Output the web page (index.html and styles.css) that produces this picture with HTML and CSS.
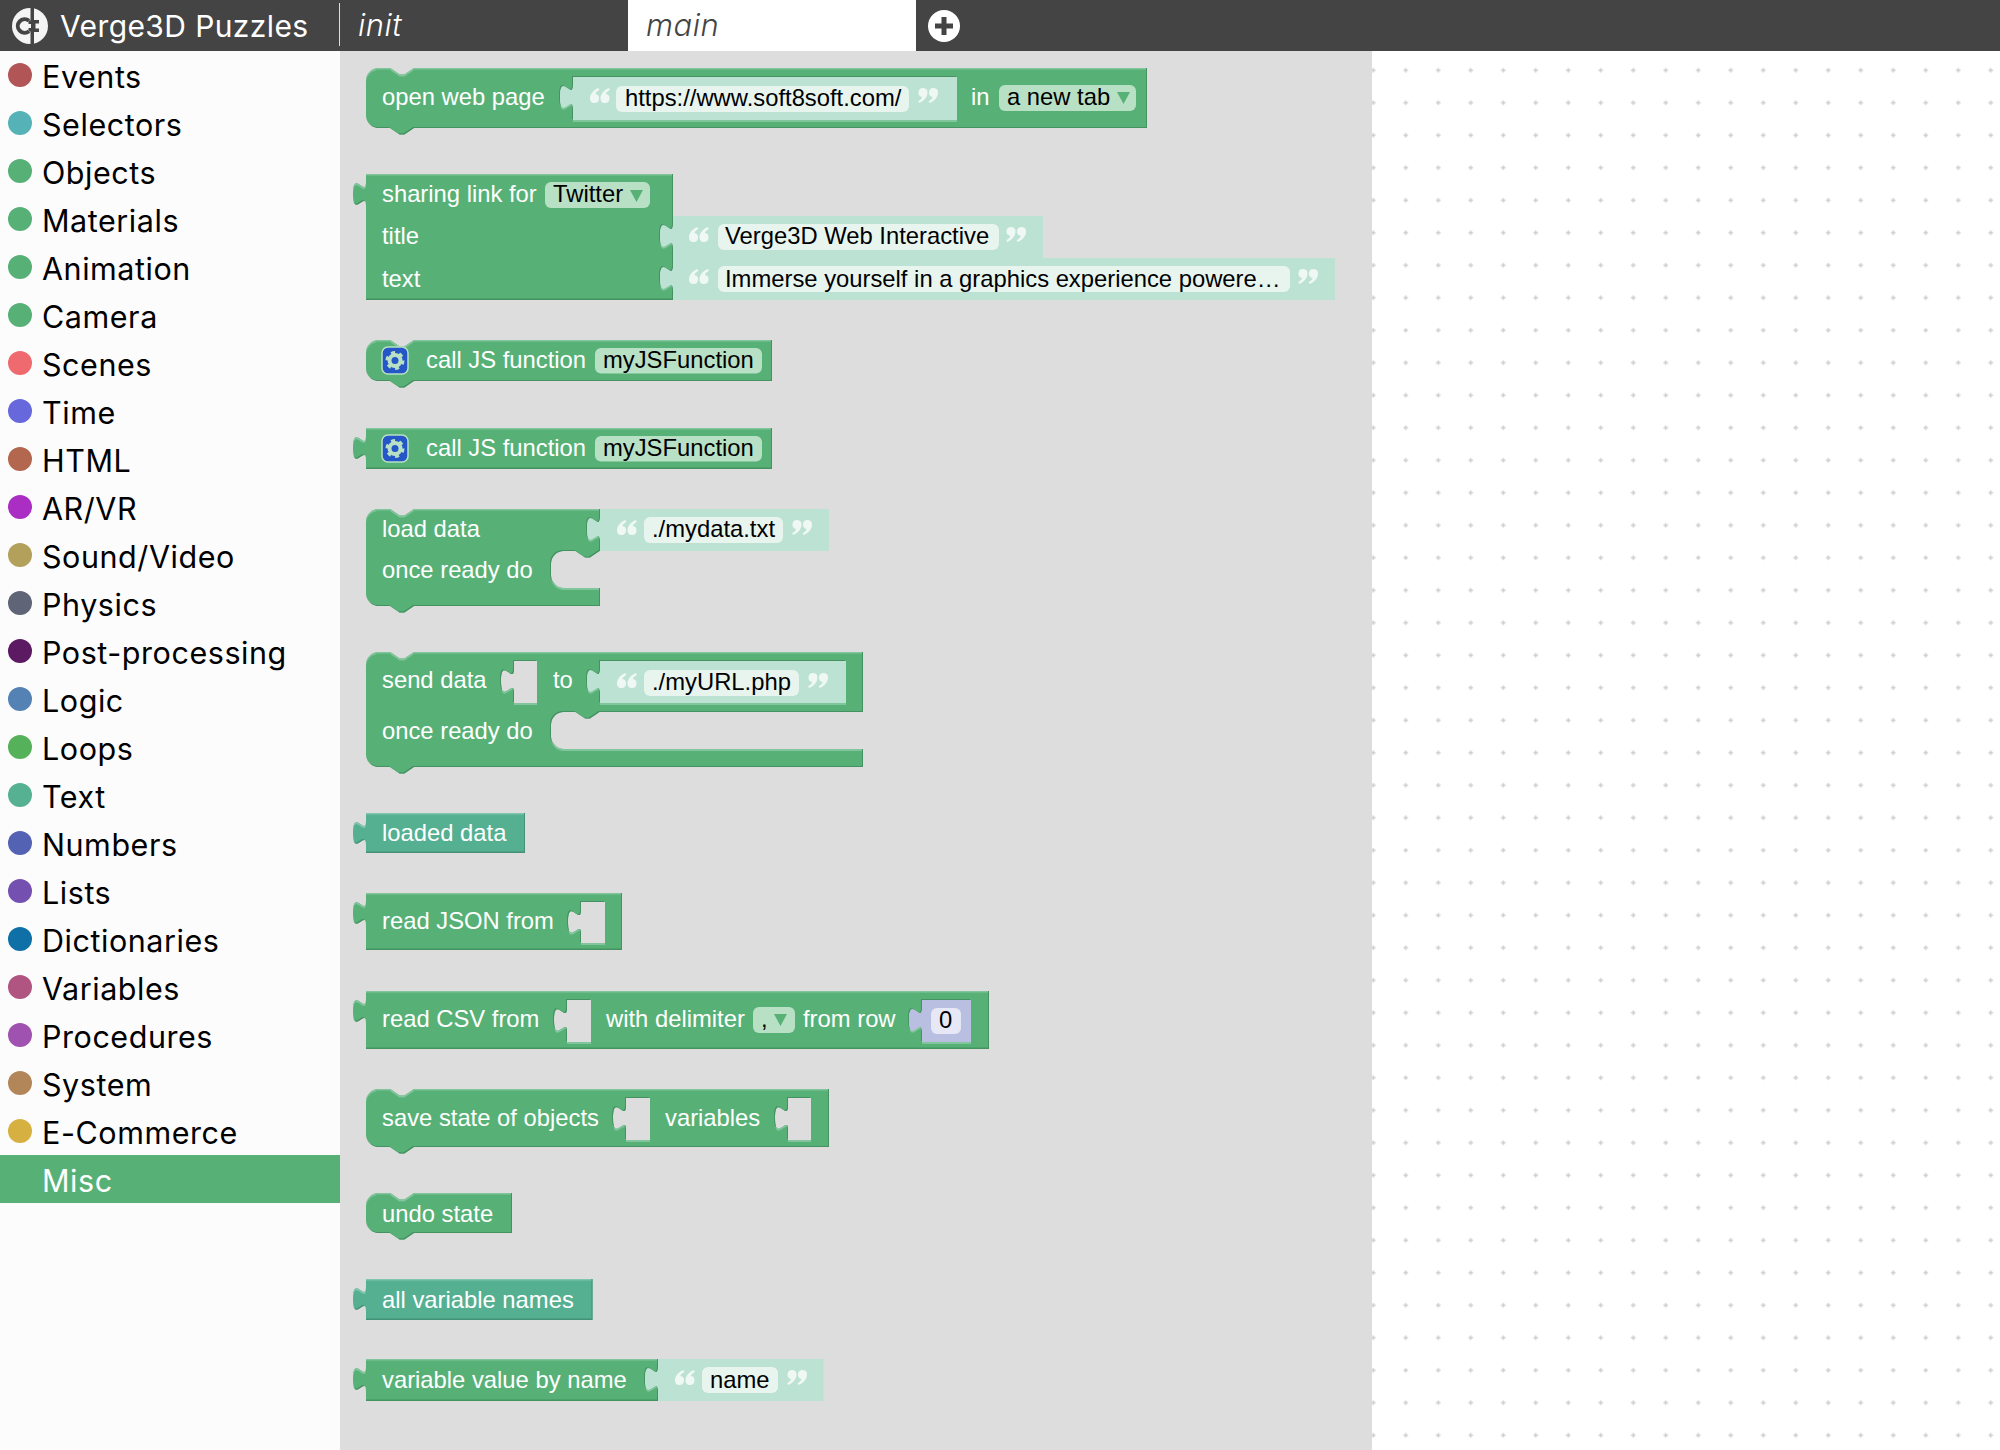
FILE: index.html
```html
<!DOCTYPE html>
<html lang="en">
<head>
<meta charset="utf-8">
<title>Verge3D Puzzles</title>
<link rel="stylesheet" href="styles.css">
</head>
<body>
<header class="topbar">
  <div class="brand">
    <svg class="logo" viewBox="0 0 36 36" width="36" height="36">
      <circle cx="18" cy="18" r="18" fill="#f4f4f4"/>
      <path d="M17 12.800a6.800 6.800 0 1 0 0 10.400" fill="none" stroke="#444" stroke-width="4"/>
      <path d="M18.500 0h3.500v12h5v3.500h-3.500v5H27v3.500h-5v12h-3.500V23.500h-2v-3.500h2.500v-4h-2.500v-3.500h2z" fill="#444"/>
    </svg>
    <span class="brand-name">Verge3D Puzzles</span>
    <span class="brand-sep"></span>
  </div>
  <div class="tab">init</div>
  <div class="tab tab-active">main</div>
  <svg class="add" viewBox="0 0 32 32" width="32" height="32">
    <circle cx="16" cy="16" r="16" fill="#fff"/>
    <path d="M13.500 7h5v6.500H25v5h-6.500V25h-5v-6.500H7v-5h6.500z" fill="#444"/>
  </svg>
</header>
<main class="main">
  <nav class="toolbox">
    <div class="cat"><i class="dot c-events"></i>Events</div>
    <div class="cat"><i class="dot c-selectors"></i>Selectors</div>
    <div class="cat"><i class="dot c-green"></i>Objects</div>
    <div class="cat"><i class="dot c-green"></i>Materials</div>
    <div class="cat"><i class="dot c-green"></i>Animation</div>
    <div class="cat"><i class="dot c-green"></i>Camera</div>
    <div class="cat"><i class="dot c-scenes"></i>Scenes</div>
    <div class="cat"><i class="dot c-time"></i>Time</div>
    <div class="cat"><i class="dot c-html"></i>HTML</div>
    <div class="cat"><i class="dot c-arvr"></i>AR/VR</div>
    <div class="cat"><i class="dot c-sound"></i>Sound/Video</div>
    <div class="cat"><i class="dot c-physics"></i>Physics</div>
    <div class="cat"><i class="dot c-post"></i>Post-processing</div>
    <div class="cat"><i class="dot c-logic"></i>Logic</div>
    <div class="cat"><i class="dot c-loops"></i>Loops</div>
    <div class="cat"><i class="dot c-text"></i>Text</div>
    <div class="cat"><i class="dot c-numbers"></i>Numbers</div>
    <div class="cat"><i class="dot c-lists"></i>Lists</div>
    <div class="cat"><i class="dot c-dicts"></i>Dictionaries</div>
    <div class="cat"><i class="dot c-vars"></i>Variables</div>
    <div class="cat"><i class="dot c-procs"></i>Procedures</div>
    <div class="cat"><i class="dot c-system"></i>System</div>
    <div class="cat"><i class="dot c-ecom"></i>E-Commerce</div>
    <div class="cat cat-active"><i class="dot c-green"></i>Misc</div>
  </nav>
  <svg class="flyout" viewBox="340 51 1032 1399" width="1032" height="1399">
    <defs>
      <filter id="bevel" x="-3%" y="-10%" width="106%" height="120%" color-interpolation-filters="sRGB">
        <feOffset in="SourceAlpha" dy="1.500" result="down"/>
        <feComposite in="SourceAlpha" in2="down" operator="out" result="topEdge"/>
        <feFlood flood-color="#80c59b"/>
        <feComposite in2="topEdge" operator="in" result="light"/>
        <feOffset in="SourceAlpha" dx="-1" dy="-1.500" result="up"/>
        <feComposite in="SourceAlpha" in2="up" operator="out" result="botEdge"/>
        <feFlood flood-color="#459161"/>
        <feComposite in2="botEdge" operator="in" result="dark"/>
        <feMerge>
          <feMergeNode in="SourceGraphic"/>
          <feMergeNode in="light"/>
          <feMergeNode in="dark"/>
        </feMerge>
      </filter>
      <filter id="bevel-teal" x="-3%" y="-10%" width="106%" height="120%" color-interpolation-filters="sRGB">
        <feOffset in="SourceAlpha" dy="1.500" result="down"/>
        <feComposite in="SourceAlpha" in2="down" operator="out" result="topEdge"/>
        <feFlood flood-color="#80c5ae"/>
        <feComposite in2="topEdge" operator="in" result="light"/>
        <feOffset in="SourceAlpha" dx="-1" dy="-1.500" result="up"/>
        <feComposite in="SourceAlpha" in2="up" operator="out" result="botEdge"/>
        <feFlood flood-color="#449177"/>
        <feComposite in2="botEdge" operator="in" result="dark"/>
        <feMerge>
          <feMergeNode in="SourceGraphic"/>
          <feMergeNode in="light"/>
          <feMergeNode in="dark"/>
        </feMerge>
      </filter>
      <g id="gear">
        <rect x="-13" y="-13.500" width="26" height="27" rx="6" class="ic-bg"/>
        <circle r="5.500" class="ic-ring"/>
        <circle r="8" class="ic-teeth"/>
      </g>
      <path id="qo" class="qm" d="M8.500 0C3.500 2 0 6 0 10.500a4.500 4.500 0 1 0 5.300-4.400C5.500 4.700 7 3.200 9.300 2zM19 0c-5 2-8.500 6-8.500 10.500a4.500 4.500 0 1 0 5.300-4.400c.2-1.400 1.700-2.900 4-4.100z"/>
      <use id="qc" href="#qo" transform="rotate(180 10 7.500)"/>
    </defs>

    <!-- open web page -->
    <path class="blk" fill-rule="evenodd" d="M366 80.800a12.800 12.800 0 0 1 12.800-12.800H390l9.600 6.400h4.800l9.600-6.400H1147V128H414l-9.600 6.400h-4.800L390 128H378.800a12.800 12.800 0 0 1-12.800-12.800zM573 77H957V120H573V109c0-16-13 13-13-12s13 4 13-12z"/>
    <path class="shd" d="M573 77H957V120H573V109c0-16-13 13-13-12s13 4 13-12z"/>
    <text class="t" x="382" y="105">open web page</text>
    <use href="#qo" x="590" y="88"/>
    <rect class="fld" x="616" y="86" width="293" height="26" rx="6"/>
    <text class="f" x="625" y="106">https://www.soft8soft.com/</text>
    <use href="#qc" x="918" y="88"/>
    <text class="t" x="971" y="105">in</text>
    <rect class="dd" x="999" y="85" width="137" height="26" rx="6"/>
    <text class="f" x="1007" y="105">a new tab</text>
    <path class="arr" d="M1117 92h13l-6.500 12z"/>

    <!-- sharing link -->
    <path class="blk" d="M366 174H673V224c0 16-13-13-13 12s13-4 13 12V266c0 16-13-13-13 12s13-4 13 12V300H366V206c0-16-13 13-13-12s13 4 13-12z"/>
    <path class="shd" d="M673 216H1043V258H673V248c0-16-13 13-13-12s13 4 13-12z"/>
    <path class="shd" d="M673 258H1335V300H673V290c0-16-13 13-13-12s13 4 13-12z"/>
    <text class="t" x="382" y="202">sharing link for</text>
    <rect class="dd" x="545" y="182" width="105" height="26" rx="6"/>
    <text class="f" x="553" y="202">Twitter</text>
    <path class="arr" d="M630 190h13l-6.500 12z"/>
    <text class="t" x="382" y="244">title</text>
    <use href="#qo" x="689" y="227"/>
    <rect class="fld" x="718" y="224" width="281" height="26" rx="6"/>
    <text class="f" x="725" y="244">Verge3D Web Interactive</text>
    <use href="#qc" x="1006" y="227"/>
    <text class="t" x="382" y="287">text</text>
    <use href="#qo" x="689" y="269"/>
    <rect class="fld" x="718" y="266" width="572" height="26" rx="6"/>
    <text class="f" x="725" y="287">Immerse yourself in a graphics experience powere…</text>
    <use href="#qc" x="1298" y="269"/>

    <!-- call JS hat -->
    <path class="blk" d="M366 352.800a12.800 12.800 0 0 1 12.800-12.800H390l9.600 6.400h4.800l9.600-6.400H772V381H414l-9.600 6.400h-4.800L390 381H378.800a12.800 12.800 0 0 1-12.800-12.800z"/>
    <use href="#gear" x="395" y="360.500"/>
    <text class="t" x="426" y="368">call JS function</text>
    <rect class="dd" x="595" y="348" width="167" height="25.500" rx="6"/>
    <text class="f" x="603" y="368">myJSFunction</text>

    <!-- call JS value -->
    <path class="blk" d="M366 428H772V469H366V460c0-16-13 13-13-12s13 4 13-12z"/>
    <use href="#gear" x="395" y="448.500"/>
    <text class="t" x="426" y="456">call JS function</text>
    <rect class="dd" x="595" y="436" width="167" height="25.500" rx="6"/>
    <text class="f" x="603" y="456">myJSFunction</text>

    <!-- load data -->
    <path class="blk" d="M366 521.800a12.800 12.800 0 0 1 12.800-12.800H390l9.600 6.400h4.800l9.600-6.400H600V517c0 16-13-13-13 12s13-4 13 12V551H599.500l-9.600 6.400h-4.800l-9.600-6.400H563.800a12.800 12.800 0 0 0-12.800 12.800v11.400a12.800 12.800 0 0 0 12.800 12.800H600V606H414l-9.600 6.400h-4.800L390 606H378.800a12.800 12.800 0 0 1-12.800-12.800z"/>
    <path class="shd" d="M600 509H829V551H600V541c0-16-13 13-13-12s13 4 13-12z"/>
    <text class="t" x="382" y="537">load data</text>
    <text class="t" x="382" y="578">once ready do</text>
    <use href="#qo" x="617" y="520"/>
    <rect class="fld" x="644" y="517" width="139" height="26" rx="6"/>
    <text class="f" x="652" y="537">./mydata.txt</text>
    <use href="#qc" x="792" y="520"/>

    <!-- send data -->
    <path class="blk" fill-rule="evenodd" d="M366 664.800a12.800 12.800 0 0 1 12.800-12.800H390l9.600 6.400h4.800l9.600-6.400H863V712H599.500l-9.600 6.400h-4.800l-9.600-6.400H563.800a12.800 12.800 0 0 0-12.800 12.800v11.400a12.800 12.800 0 0 0 12.800 12.800H863V767H414l-9.600 6.400h-4.800L390 767H378.800a12.800 12.800 0 0 1-12.800-12.800zM514 661H537V703H514V693c0-16-13 13-13-12s13 4 13-12zM600 661H846V703H600V693c0-16-13 13-13-12s13 4 13-12z"/>
    <path class="shd" d="M600 661H846V703H600V693c0-16-13 13-13-12s13 4 13-12z"/>
    <text class="t" x="382" y="688">send data</text>
    <text class="t" x="553" y="688">to</text>
    <text class="t" x="382" y="739">once ready do</text>
    <use href="#qo" x="617" y="673"/>
    <rect class="fld" x="644" y="670" width="155" height="26" rx="6"/>
    <text class="f" x="652" y="690">./myURL.php</text>
    <use href="#qc" x="808" y="673"/>

    <!-- loaded data -->
    <path class="blk teal" d="M366 813H525V853H366V845c0-16-13 13-13-12s13 4 13-12z"/>
    <text class="t" x="382" y="841">loaded data</text>

    <!-- read JSON -->
    <path class="blk" fill-rule="evenodd" d="M366 893H622V950H366V925c0-16-13 13-13-12s13 4 13-12zM581 902H605V943H581V934c0-16-13 13-13-12s13 4 13-12z"/>
    <text class="t" x="382" y="929">read JSON from</text>

    <!-- read CSV -->
    <path class="blk" fill-rule="evenodd" d="M366 991H989V1049H366V1023c0-16-13 13-13-12s13 4 13-12zM567 1000H591V1042H567V1032c0-16-13 13-13-12s13 4 13-12zM922 1000H971V1042H922V1032c0-16-13 13-13-12s13 4 13-12z"/>
    <path class="shd num" d="M922 1000H971V1042H922V1032c0-16-13 13-13-12s13 4 13-12z"/>
    <text class="t" x="382" y="1027">read CSV from</text>
    <text class="t" x="606" y="1027">with delimiter</text>
    <rect class="dd" x="753" y="1007" width="42" height="26" rx="6"/>
    <text class="f" x="761" y="1027">,</text>
    <path class="arr" d="M774 1014h13l-6.500 12z"/>
    <text class="t" x="803" y="1027">from row</text>
    <rect class="fld numf" x="931" y="1008" width="30" height="26" rx="6"/>
    <text class="f" x="939" y="1028">0</text>

    <!-- save state -->
    <path class="blk" fill-rule="evenodd" d="M366 1101.800a12.800 12.800 0 0 1 12.800-12.800H390l9.600 6.400h4.800l9.600-6.400H829V1147H414l-9.600 6.400h-4.800L390 1147H378.800a12.800 12.800 0 0 1-12.800-12.800zM626 1098H650V1140H626V1130c0-16-13 13-13-12s13 4 13-12zM788 1098H811V1140H788V1130c0-16-13 13-13-12s13 4 13-12z"/>
    <text class="t" x="382" y="1126">save state of objects</text>
    <text class="t" x="665" y="1126">variables</text>

    <!-- undo state -->
    <path class="blk" d="M366 1205.800a12.800 12.800 0 0 1 12.800-12.800H390l9.600 6.400h4.800l9.600-6.400H512V1233H414l-9.600 6.400h-4.800L390 1233H378.800a12.800 12.800 0 0 1-12.800-12.800z"/>
    <text class="t" x="382" y="1222">undo state</text>

    <!-- all variable names -->
    <path class="blk teal" d="M366 1279H592.500V1320H366V1311c0-16-13 13-13-12s13 4 13-12z"/>
    <text class="t" x="382" y="1308">all variable names</text>

    <!-- variable value by name -->
    <path class="blk" d="M366 1359H658V1367c0 16-13-13-13 12s13-4 13 12V1401H366V1391c0-16-13 13-13-12s13 4 13-12z"/>
    <path class="shd" d="M658 1359H823.500V1401H658V1391c0-16-13 13-13-12s13 4 13-12z"/>
    <text class="t" x="382" y="1388">variable value by name</text>
    <use href="#qo" x="675" y="1370"/>
    <rect class="fld" x="702" y="1367" width="76" height="26" rx="6"/>
    <text class="f" x="710" y="1388">name</text>
    <use href="#qc" x="787" y="1370"/>
  </svg>
  <svg class="workspace" width="628" height="1399">
    <defs>
      <pattern id="grid" width="32.500" height="32.500" patternUnits="userSpaceOnUse" patternTransform="translate(-15 3)">
        <path class="cross" d="M14 16.250h4.500M16.250 14v4.500"/>
      </pattern>
    </defs>
    <rect width="628" height="1399" fill="url(#grid)"/>
  </svg>
</main>
</body>
</html>
```
FILE: styles.css
```css
html, body {
  margin: 0;
  height: 100%;
  overflow: hidden;
  background: #fff;
}
body {
  display: flex;
  flex-direction: column;
  width: 2000px;
  height: 1450px;
  font-family: "Inter", "Roboto", "Liberation Sans", sans-serif;
}
.topbar {
  display: flex;
  align-items: center;
  height: 51px;
  background: #444;
  flex: none;
}
.brand {
  display: flex;
  align-items: center;
  width: 340px;
  height: 51px;
  position: relative;
  flex: none;
}
.logo {
  margin-left: 12px;
  flex: none;
}
.brand-name {
  margin-left: 12px;
  color: #fff;
  font-size: 30px;
  font-weight: 400;
  letter-spacing: 0.400px;
  line-height: 48px;
  white-space: nowrap;
}
.brand-sep {
  position: absolute;
  right: 0;
  top: 3px;
  bottom: 5px;
  width: 1px;
  background: #ddd;
}
.tab {
  width: 270px;
  height: 51px;
  padding-left: 18px;
  line-height: 50px;
  font-size: 31px;
  font-style: italic;
  font-weight: 300;
  letter-spacing: 0.500px;
  color: #fff;
  flex: none;
}
.tab-active {
  background: #fff;
  color: #444;
}
.add {
  margin-left: 12px;
  flex: none;
}
.main {
  display: flex;
  flex: 1;
  min-height: 0;
}
.toolbox {
  width: 340px;
  flex: none;
  background: #fcfcfc;
}
.cat {
  display: flex;
  align-items: center;
  box-sizing: border-box;
  height: 48px;
  padding: 2px 0 0 8px;
  font-size: 30.500px;
  letter-spacing: 0.550px;
  color: #000;
  white-space: nowrap;
}
.dot {
  width: 24px;
  height: 24px;
  border-radius: 50%;
  margin: -2px 10px 0 0;
  flex: none;
}
.cat-active {
  background: #57b176;
  color: #fff;
}
.c-events { background: #b25557; }
.c-selectors { background: #55b3b8; }
.c-green { background: #57b176; }
.c-scenes { background: #ee6a6e; }
.c-time { background: #6668dc; }
.c-html { background: #b4674f; }
.c-arvr { background: #aa2ec4; }
.c-sound { background: #b3a05a; }
.c-physics { background: #5f6476; }
.c-post { background: #5c1a62; }
.c-logic { background: #5582b5; }
.c-loops { background: #55b15a; }
.c-text { background: #55b192; }
.c-numbers { background: #5462b3; }
.c-lists { background: #7451b0; }
.c-dicts { background: #0f70a8; }
.c-vars { background: #b05582; }
.c-procs { background: #a052b0; }
.c-system { background: #b3865a; }
.c-ecom { background: #d6b040; }

.flyout {
  flex: none;
  display: block;
  background: #ddd;
}
.workspace {
  flex: none;
  display: block;
  background: #fff;
}
.cross {
  stroke: #ccc;
  stroke-width: 1.500;
  fill: none;
}
.blk {
  fill: #57b176;
  filter: url(#bevel);
}
.blk.teal {
  fill: #55b092;
  filter: url(#bevel-teal);
}
.shd {
  fill: #bce2d4;
}
.shd.num {
  fill: #b9bfe0;
}
.t, .f {
  font-family: "Liberation Sans", Arial, sans-serif;
  font-size: 23.800px;
}
.t {
  fill: #fff;
}
.f {
  fill: #000;
}
.qm {
  fill: #f0f8f5;
}
.fld {
  fill: #e8f5ef;
}
.fld.numf {
  fill: #e6e8f6;
}
.dd {
  fill: #b8e0c4;
}
.arr {
  fill: #57b176;
}
.ic-bg {
  fill: #2456c8;
  stroke: #b8e0c4;
  stroke-width: 1.500;
}
.ic-ring {
  fill: none;
  stroke: #b8e0c4;
  stroke-width: 4;
}
.ic-teeth {
  fill: none;
  stroke: #b8e0c4;
  stroke-width: 3;
  stroke-dasharray: 4 4.380;
}
```
